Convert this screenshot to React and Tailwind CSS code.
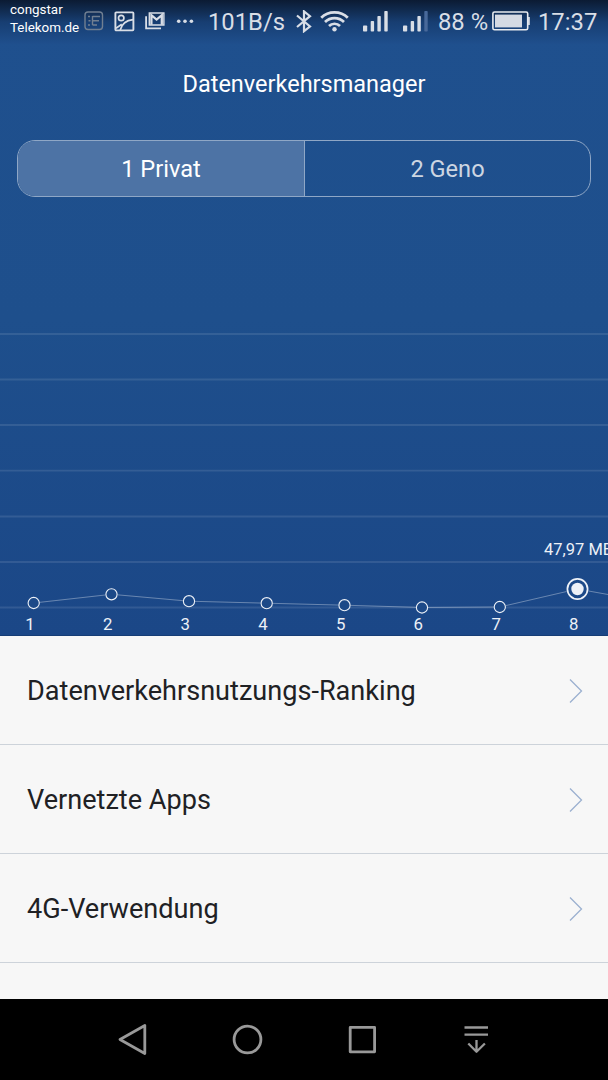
import React from 'react';

const CHART_TOP = 320;

const DAYS = [
    { day: 1, x: 33.7, y: 603 },
    { day: 2, x: 111.5, y: 594.3 },
    { day: 3, x: 189, y: 601.2 },
    { day: 4, x: 266.7, y: 603.2 },
    { day: 5, x: 344.5, y: 605.2 },
    { day: 6, x: 422, y: 607.5 },
    { day: 7, x: 499.8, y: 607 },
    { day: 8, x: 577.5, y: 589, label: '47,97 MB', active: true },
    { day: 9, x: 655, y: 603 },
];

const GRID_LINES = [334, 379.5, 425, 470.7, 516.5, 562, 607.5];

const MENU = ['Datenverkehrsnutzungs-Ranking', 'Vernetzte Apps', '4G-Verwendung'];

const Signal = ({ weak = false }) => (
    <svg width="26" height="22" viewBox="0 0 26 22" fill="#d9dee6">
        <rect x="0" y="15.5" width="4.2" height="6" rx="0.8" />
        <rect x="7.7" y="11" width="3.4" height="10.5" rx="0.8" />
        <rect x="14.4" y="6" width="3.4" height="15.5" rx="0.8" />
        <rect x="21.3" y="1" width="3.4" height="20.5" rx="0.8" fill={weak ? '#48699a' : '#d9dee6'} />
    </svg>
);

const StatusBar = () => (
    <div className="flex h-11 items-start bg-gradient-to-b from-[#0b1b33] via-[#173e72] to-[#1f4f8d] text-[24px] leading-[24px] text-[#d9dee6]">
        <div className="ml-[10px] mt-[1px] w-[74px] text-[13.4px] leading-[18px] whitespace-nowrap text-white">
            <div>congstar</div>
            <div>Telekom.de</div>
        </div>
        <svg className="mt-[11px]" width="20" height="20" viewBox="0 0 20 20" fill="none" stroke="#717f91" strokeWidth="1.4">
            <rect x="1" y="1" width="17.5" height="17.5" rx="3" />
            <path d="M4 5.5h2M4.5 9.7h2M4 14h2M8.5 5.5H16M8.5 9.7H15M8.5 14H13M8.5 5v9" />
        </svg>
        <svg className="ml-[10px] mt-[11px]" width="21" height="21" viewBox="0 0 21 21" fill="none" stroke="#d9dee6" strokeWidth="1.9">
            <rect x="1.4" y="1.4" width="18" height="18" rx="0.8" />
            <circle cx="7.2" cy="7" r="2.7" strokeWidth="1.7" />
            <path d="M6.2 19C7.8 12.8 12.2 9.3 19 8.6M2 17.2l5.8-3.9" strokeWidth="1.7" />
        </svg>
        <svg className="ml-[10px] mt-[12px]" width="20" height="18" viewBox="0 0 20 18" fill="none" stroke="#d9dee6">
            <path d="M1.1 4.2v12.2H16" strokeWidth="1.8" />
            <path d="M4.3 1h14.6v12H4.3z" strokeWidth="1.4" />
            <path d="M6.4 12.8V3.2l5.2 4.4L16.8 3.2v9.6" strokeWidth="2.3" />
        </svg>
        <svg className="ml-[11px] mt-[19px]" width="18" height="5" viewBox="0 0 18 5" fill="#d9dee6">
            <circle cx="2.7" cy="2.2" r="1.8" />
            <circle cx="9" cy="2.2" r="1.8" />
            <circle cx="15.4" cy="2.2" r="1.8" />
        </svg>
        <div className="ml-[14px] mt-[10px] w-[88px] whitespace-nowrap text-[23.8px]">101B/s</div>
        <svg className="mt-[10px]" width="16" height="23" viewBox="0 0 16 23" fill="none" stroke="#d9dee6" strokeWidth="2.2">
            <path d="M1 5.5l13 11-6 4.7V1.4l6 4.8L1 17" />
        </svg>
        <svg className="ml-[8px] mt-[10px]" width="29" height="22" viewBox="0 0 29 22" fill="none" stroke="#d9dee6" strokeWidth="2.7">
            <path d="M1.2 7.8C8.4 0.5 20.6 0.5 27.8 7.8M5 12C10.2 6.8 18.8 6.8 24 12M9 16C12 13 17 13 20 16" />
            <circle cx="14.5" cy="19.2" r="2.2" fill="#d9dee6" stroke="none" />
        </svg>
        <div className="ml-[14px] mt-[10px]"><Signal /></div>
        <div className="ml-[14px] mt-[10px]"><Signal weak /></div>
        <div className="ml-[9px] mt-[10px] w-[54px] whitespace-nowrap text-[23.8px]">88 %</div>
        <svg className="mt-[11px]" width="38" height="20" viewBox="0 0 38 20" fill="none">
            <rect x="0.9" y="1" width="34.8" height="17.8" rx="1.6" stroke="#e8ebf0" strokeWidth="1.6" />
            <rect x="3" y="3.6" width="27" height="12.8" fill="#d5dae3" />
            <rect x="35.8" y="6" width="2" height="8" fill="#d9dee6" />
        </svg>
        <div className="ml-[8px] mt-[10px] whitespace-nowrap text-[23.8px]">17:37</div>
    </div>
);

const UsageChart = () => (
    <svg className="block" width="608" height="316" viewBox={`0 ${CHART_TOP} 608 316`}>
        {GRID_LINES.map((y) => (
            <line key={y} x1="0" x2="608" y1={y} y2={y} stroke="#fff" strokeOpacity="0.1" strokeWidth="1.8" />
        ))}
        {DAYS.slice(1).map((to, i) => {
            // keep the connecting line outside both markers
            const from = DAYS[i];
            const start = from.active ? 11 : 6;
            const end = to.active ? 11 : 6;
            const slope = (to.y - from.y) / (to.x - from.x);
            return (
                <line
                    key={to.day}
                    x1={from.x + start}
                    y1={from.y + slope * start}
                    x2={to.x - end}
                    y2={to.y - slope * end}
                    stroke="#fff"
                    strokeOpacity="0.34"
                />
            );
        })}
        {DAYS.slice(0, 8).map(({ day, x, y, active, label }) => (
            <g key={day}>
                <circle cx={x} cy={y} r={active ? 10.1 : 5.6} fill="#1c4988" stroke="#edf1f7" strokeWidth={active ? 1.7 : 1.1} />
                {active && <circle cx={x} cy={y} r="6.2" fill="#edf1f7" />}
                <text x={x - 3.7} y="630" fill="#edf1f7" fontSize="16.8" textAnchor="middle">{day}</text>
                {label && <text x="544" y="555" fill="#edf1f7" fontSize="16.5">{label}</text>}
            </g>
        ))}
    </svg>
);

const NavBar = () => (
    <div className="flex h-[81px] items-center justify-center bg-black">
        <svg width="458" height="40" viewBox="75 1020 458 40" fill="none" stroke="#999" strokeWidth="2.8" strokeLinejoin="round" strokeLinecap="round">
            <path d="M144.8 1025.5v28L120 1039.5z" />
            <circle cx="247.5" cy="1039.5" r="13.4" />
            <rect x="350.2" y="1027.4" width="24.4" height="24.4" />
            <path d="M464.5 1027.5h23.5M464.5 1034.7h23.5M476.5 1040v11.5M468.3 1043.5l8.2 8.2 8.4-8.2" strokeWidth="2.3" strokeLinecap="butt" />
        </svg>
    </div>
);

export default function App() {
    return (
        <div className="flex h-[1080px] w-[608px] flex-col overflow-hidden bg-[#f7f7f7] font-['Roboto',sans-serif]">
            <header className="flex h-[636px] flex-col border-b border-[#163d75] bg-gradient-to-b from-[#1f508e] via-[#1e4f8c] to-[#1b4787]">
                <StatusBar />
                <h1 className="pt-6 text-center text-[23.5px] leading-8 text-white">Datenverkehrsmanager</h1>
                <div className="mx-[17px] mt-10 flex h-[57px] overflow-hidden rounded-[18px] border border-[#8fa7c6] text-[23.6px]">
                    <button className="w-[287px] border-r border-[#8fa7c6] bg-[#4d73a5] pt-0.5 text-white">1 Privat</button>
                    <button className="flex-1 pt-0.5 text-[#cdd6e2]">2 Geno</button>
                </div>
                <div className="mt-auto h-[315px]">
                    <UsageChart />
                </div>
            </header>

            <main className="flex-1">
                {MENU.map((item) => (
                    <div key={item} className="flex h-[109px] items-center justify-between border-b border-[#cdd3da] pr-[25px] pl-[27px] pt-0.5 text-[27.1px] text-[#202124]">
                        <span>{item}</span>
                        <svg width="14" height="26" viewBox="0 0 14 26" fill="none" stroke="#9bb0d0" strokeWidth="1.3">
                            <path d="M1 1.5L12.5 13 1 24.5" />
                        </svg>
                    </div>
                ))}
            </main>

            <NavBar />
        </div>
    );
}
